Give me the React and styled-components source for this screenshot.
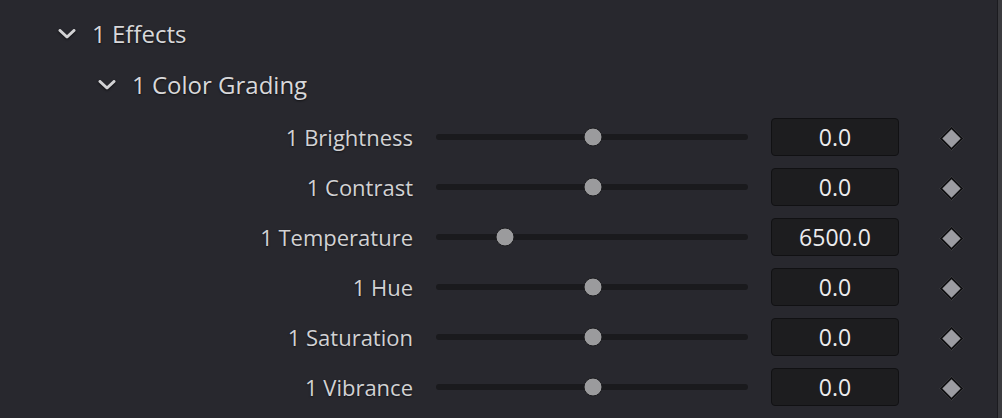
import React from 'react';
import styled, { createGlobalStyle } from 'styled-components';

const params = [
  { name: '1 Brightness', pct: 50.3, value: '0.0' },
  { name: '1 Contrast', pct: 50.3, value: '0.0' },
  { name: '1 Temperature', pct: 22.1, value: '6500.0' },
  { name: '1 Hue', pct: 50.3, value: '0.0' },
  { name: '1 Saturation', pct: 50.3, value: '0.0' },
  { name: '1 Vibrance', pct: 50.3, value: '0.0' },
];

const Chevron = () => (
  <svg width="20" height="12" viewBox="0 0 20 12">
    <polyline
      points="3,2.5 10,9 17,2.5"
      fill="none"
      stroke="#d2d2d4"
      strokeWidth="3"
      strokeLinecap="round"
      strokeLinejoin="round"
    />
  </svg>
);

const App = () => (
  <>
    <GlobalStyle />
    <Frame>
      <Panel>
        <Header $indent={57}>
          <Chevron />
          <span>1 Effects</span>
        </Header>
        <Header $indent={97} $last>
          <Chevron />
          <span>1 Color Grading</span>
        </Header>

        {params.map((p) => (
          <Row key={p.name}>
            <Label>{p.name}</Label>
            <Track>
              <Thumb style={{ left: `${p.pct}%` }} />
            </Track>
            <ValueBox>{p.value}</ValueBox>
            <KeyCell>
              <Keyframe />
            </KeyCell>
          </Row>
        ))}
      </Panel>
      <Edge />
      <Scroll />
    </Frame>
  </>
);

const GlobalStyle = createGlobalStyle`
  html, body {
    margin: 0;
    padding: 0;
    background: #28282e;
  }
  body {
    font-family: "Open Sans", "Noto Sans", sans-serif;
  }
`;

const Frame = styled.div`
  display: flex;
  width: 1002px;
  height: 418px;
  background: #28282e;
  overflow: hidden;
`;

const Panel = styled.div`
  flex: 1;
  padding-top: 8px;
  display: flex;
  flex-direction: column;
`;

const Edge = styled.div`
  width: 1px;
  background: #1b1b1f;
`;

const Scroll = styled.div`
  width: 4px;
  background: #3b3b3f;
`;

const Header = styled.div`
  height: 51px;
  margin-bottom: ${({ $last }) => ($last ? '2px' : '0')};
  padding-left: ${({ $indent }) => $indent}px;
  display: flex;
  align-items: center;
  gap: 15px;
  color: #d8d8da;
  font-size: 24px;
  text-shadow: 0 1px 2px rgba(0, 0, 0, 0.6);

  svg {
    filter: drop-shadow(0 1px 1px rgba(0, 0, 0, 0.6));
  }
`;

const Row = styled.div`
  height: 50px;
  display: grid;
  grid-template-columns: 413px 312px 128px 58px;
  column-gap: 23px;
  align-items: center;
`;

const Label = styled.div`
  text-align: right;
  color: #d2d2d4;
  font-size: 22px;
  text-shadow: 0 1px 2px rgba(0, 0, 0, 0.5);
`;

const Track = styled.div`
  position: relative;
  height: 6px;
  border-radius: 3px;
  background: #1a1a1d;
`;

const Thumb = styled.div`
  position: absolute;
  top: 50%;
  width: 17px;
  height: 17px;
  border-radius: 50%;
  background: #9b9b9d;
  border: 1.5px solid #1c1c1f;
  transform: translate(-50%, -50%);
`;

const ValueBox = styled.div`
  height: 38px;
  box-sizing: border-box;
  border: 1px solid #111113;
  border-radius: 4px;
  background: #1d1d1f;
  display: flex;
  align-items: center;
  justify-content: center;
  color: #ececee;
  font-size: 23px;
`;

const KeyCell = styled.div`
  display: flex;
  justify-content: center;
  align-items: center;
  padding-top: 2px;
`;

const Keyframe = styled.div`
  width: 13px;
  height: 13px;
  background: #9c9ca2;
  border: 2px solid #111113;
  transform: rotate(45deg);
`;

export default App;
